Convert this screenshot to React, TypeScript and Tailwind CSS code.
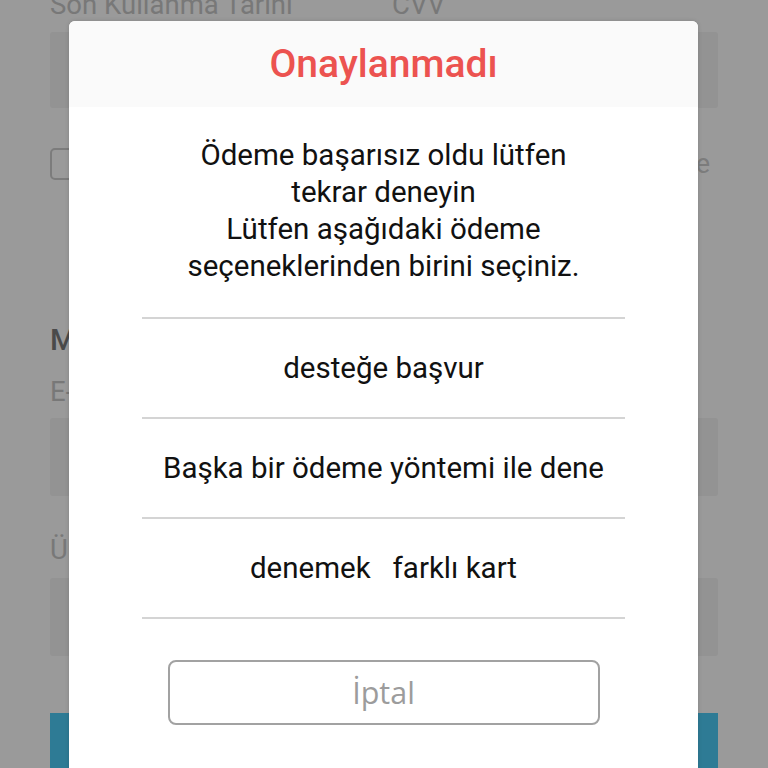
import React from 'react'

const options = ['desteğe başvur', 'Başka bir ödeme yöntemi ile dene', 'denemek\u00a0\u00a0 farklı kart']

export default function App() {
  return (
    <div className="relative h-[768px] w-full overflow-hidden bg-[#9a9a9a] font-['Roboto',sans-serif]">
      {/* dimmed page underneath */}
      <div className="px-[50px]">
        <div className="-mt-[10px] flex h-[30px] text-[27.5px] leading-[30px] text-[#787878]">
          <span className="w-[342px]">Son Kullanma Tarihi</span>
          <span>CVV</span>
        </div>
        <div className="mt-[12px] flex h-[76px] gap-[20px]">
          <div className="flex-1 rounded-[3px] bg-[#939393]" />
          <div className="flex-1 rounded-[3px] bg-[#939393]" />
        </div>
        <div className="mt-[40px] flex h-[32px] items-center justify-between">
          <div className="h-[32px] w-[32px] rounded-[5px] border-2 border-[#7c7c7c]" />
          <div className="mr-[8px] flex w-[14px] justify-end overflow-hidden">
            <span className="whitespace-nowrap text-[27px] text-[#7c7c7c]">Sözleşme</span>
          </div>
        </div>
        <div className="mt-[143px] h-[34px] text-[30px] font-medium leading-[34px] text-[#4a4a4a]">Mail Adresi</div>
        <div className="mt-[20px] h-[30px] text-[27.5px] leading-[30px] text-[#787878]">E-Posta</div>
        <div className="mt-[11px] h-[78px] rounded-[3px] bg-[#939393]" />
        <div className="mt-[39px] h-[30px] text-[27.5px] leading-[30px] text-[#787878]">Ürün</div>
        <div className="mt-[13px] h-[78px] rounded-[3px] bg-[#939393]" />
        <div className="mt-[57px] h-[70px] bg-[#2e7b95]" />
      </div>

      {/* dialog */}
      <div className="absolute left-[69px] top-[21px] w-[629px] overflow-hidden rounded-[6px] bg-white pb-[60px] shadow-[0_0_4px_rgba(0,0,0,0.15)]">
        <div className="flex h-[86px] items-center justify-center bg-[#fafafa]">
          <span className="text-[39px] font-medium text-[#ec5350]">Onaylanmadı</span>
        </div>
        <div className="pt-[30px] text-center text-[29.5px] leading-[37px] text-[#111]">
          <p>Ödeme başarısız oldu lütfen</p>
          <p>tekrar deneyin</p>
          <p>Lütfen aşağıdaki ödeme</p>
          <p>seçeneklerinden birini seçiniz.</p>
        </div>
        <div className="mx-[73px] mt-[32px] border-b-2 border-[#d4d4d4]">
          {options.map(o => (
            <div
              key={o}
              className="flex h-[100px] items-center justify-center border-t-2 border-[#d4d4d4] text-[29.5px] text-[#111]"
            >
              {o}
            </div>
          ))}
        </div>
        <button className="mx-auto mt-[41px] flex h-[65px] w-[432px] items-center justify-center rounded-[8px] border-2 border-[#a2a2a2] font-['Open_Sans',sans-serif] text-[30.5px] text-[#9c9c9c]">
          İptal
        </button>
      </div>
    </div>
  )
}
